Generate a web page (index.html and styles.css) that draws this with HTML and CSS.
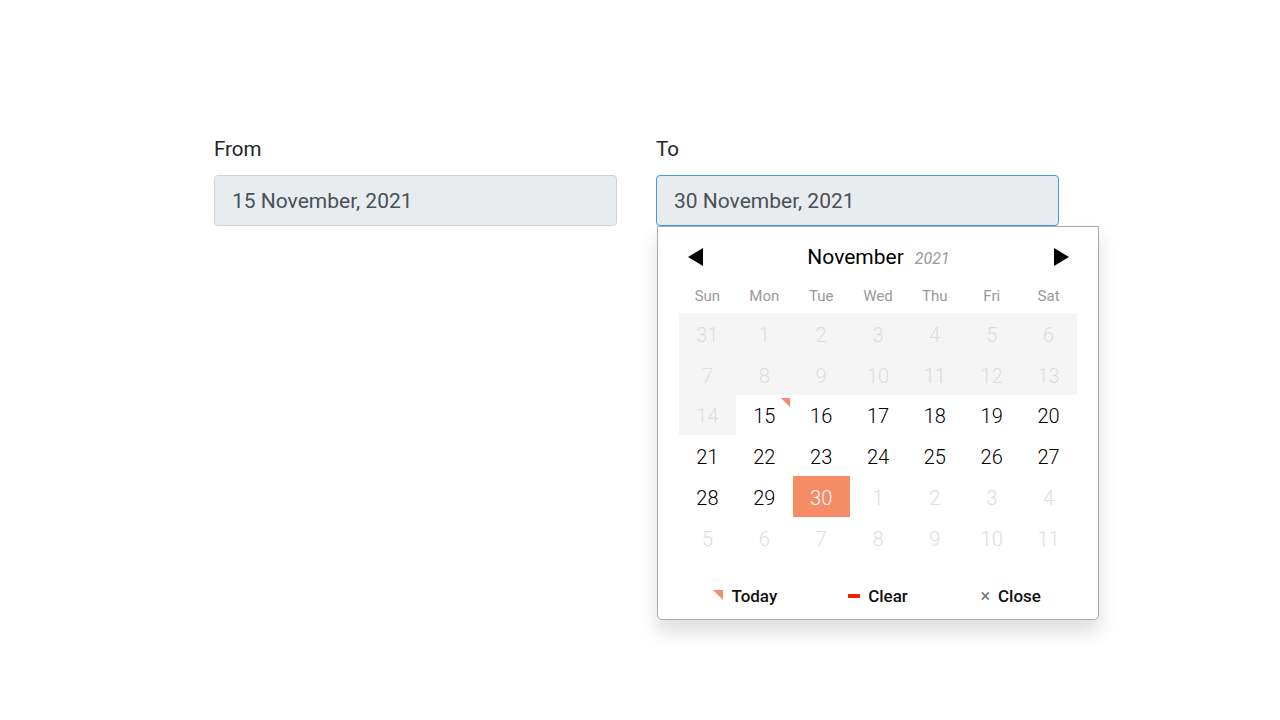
FILE: index.html
```html
<!DOCTYPE html>
<html>
<head>
<meta charset="utf-8">
<link rel="stylesheet" href="styles.css">
</head>
<body>
<div class="page">
  <div class="field">
    <div class="label">From</div>
    <div class="input">15 November, 2021</div>
  </div>
  <div class="field">
    <div class="label">To</div>
    <div class="input focused">30 November, 2021</div>
    <div class="cal">
      <div class="cal-head">
        <span class="nav prev"></span>
        <div class="title"><span class="month">November</span><span class="year">2021</span></div>
        <span class="nav next"></span>
      </div>
      <div class="weekdays">
        <span>Sun</span><span>Mon</span><span>Tue</span><span>Wed</span><span>Thu</span><span>Fri</span><span>Sat</span>
      </div>
      <div class="days">
        <span class="d off">31</span><span class="d off">1</span><span class="d off">2</span><span class="d off">3</span><span class="d off">4</span><span class="d off">5</span><span class="d off">6</span>
        <span class="d off">7</span><span class="d off">8</span><span class="d off">9</span><span class="d off">10</span><span class="d off">11</span><span class="d off">12</span><span class="d off">13</span>
        <span class="d off">14</span><span class="d now">15</span><span class="d">16</span><span class="d">17</span><span class="d">18</span><span class="d">19</span><span class="d">20</span>
        <span class="d">21</span><span class="d">22</span><span class="d">23</span><span class="d">24</span><span class="d">25</span><span class="d">26</span><span class="d">27</span>
        <span class="d">28</span><span class="d">29</span><span class="d sel">30</span><span class="d out">1</span><span class="d out">2</span><span class="d out">3</span><span class="d out">4</span>
        <span class="d out">5</span><span class="d out">6</span><span class="d out">7</span><span class="d out">8</span><span class="d out">9</span><span class="d out">10</span><span class="d out">11</span>
      </div>
      <div class="cal-foot">
        <span class="act act-now">Today</span>
        <span class="act act-clear">Clear</span>
        <span class="act act-close">Close</span>
      </div>
    </div>
  </div>
</div>
</body>
</html>
```
FILE: styles.css
```css
html, body { margin: 0; padding: 0; background: #fff; }
body { font-family: Roboto, "Liberation Sans", sans-serif; color: #212529; }
.page {
  display: flex;
  gap: 39px;
  padding: 137px 0 0 214px;
  min-height: 600px;
}
.field { position: relative; width: 403px; }
.label {
  font-size: 20.5px;
  line-height: 24px;
  margin-bottom: 14px;
  color: #212529;
}
.input {
  box-sizing: border-box;
  height: 51px;
  border: 1px solid #ced4da;
  border-radius: 4px;
  background: #e9ecef;
  color: #495057;
  font-size: 21px;
  line-height: 47px;
  padding: 2px 17px 0;
}
.input.focused { border-color: #3d9be9; }
.cal {
  position: absolute;
  left: 1px;
  top: 89px;
  width: 442px;
  box-sizing: border-box;
  background: #fff;
  border: 1px solid #aaa;
  border-radius: 0 0 5px 5px;
  box-shadow: 0 12px 18px 1px rgba(0,0,0,0.12);
  padding: 10px 21px 0;
  z-index: 5;
}
.cal-head {
  height: 40px;
  display: flex;
  align-items: center;
  justify-content: space-between;
  padding: 0 8px 0 9px;
}
.nav { display: block; width: 0; height: 0; border-top: 9px solid transparent; border-bottom: 9px solid transparent; }
.prev { border-right: 15px solid #000; }
.next { border-left: 15px solid #000; }
.title { display: flex; align-items: baseline; gap: 11px; }
.month { font-size: 21px; color: #000; }
.year { font-size: 16px; font-style: italic; color: #999; }
.weekdays {
  display: grid;
  grid-template-columns: repeat(7, 1fr);
  height: 36px;
  padding-top: 1px;
  box-sizing: border-box;
  align-items: center;
  text-align: center;
  font-size: 15px;
  color: #999;
}
.days {
  display: grid;
  grid-template-columns: repeat(7, 1fr);
  grid-auto-rows: 40.8px;
}
.d {
  position: relative;
  display: flex;
  align-items: center;
  justify-content: center;
  padding-top: 3px;
  box-sizing: border-box;
  font-size: 20px;
  font-weight: 300;
  color: #000;
}
.d.off { background: #f5f5f5; color: #ddd; }
.d.out { color: #ddd; }
.d.sel { background: #f58c65; color: #fff; }
.d.now::after {
  content: "";
  position: absolute;
  top: 3px;
  right: 3px;
  width: 0;
  height: 0;
  border-top: 9px solid #f58c65;
  border-left: 9px solid transparent;
}
.cal-foot {
  display: grid;
  grid-template-columns: repeat(3, 1fr);
  padding: 26px 0 11px;
}
.act {
  font-size: 17px;
  font-weight: 500;
  line-height: 24px;
  color: #111;
  display: flex;
  align-items: center;
  justify-content: center;
  gap: 8px;
}
.act-now::before {
  content: "";
  width: 0; height: 0;
  border-top: 10px solid #f58c65;
  border-left: 10px solid transparent;
  margin-top: -2px;
}
.act-clear::before {
  content: "";
  width: 12px; height: 4px;
  background: #e20;
}
.act-close::before {
  content: "\00d7";
  font-size: 18px;
  font-weight: 400;
  color: #777;
  line-height: 1;
}
```
